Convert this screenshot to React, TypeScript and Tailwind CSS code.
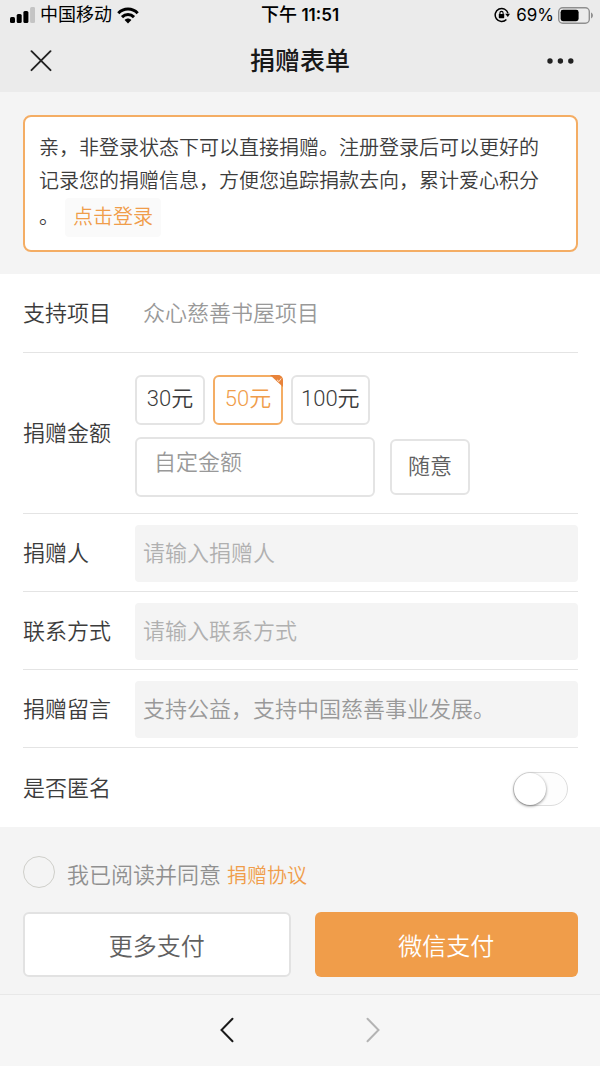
import { useState } from "react";
import type { ReactNode } from "react";

interface RowProps {
    label: string;
    htmlFor?: string;
    className?: string;
    children: ReactNode;
}

const amounts = [30, 50, 100];

const textFields = [
    { id: "donor", label: "捐赠人", placeholder: "请输入捐赠人", tone: "placeholder:text-[#b0b0b0]" },
    { id: "contact", label: "联系方式", placeholder: "请输入联系方式", tone: "placeholder:text-[#b0b0b0]" },
    { id: "message", label: "捐赠留言", placeholder: "支持公益，支持中国慈善事业发展。", tone: "placeholder:text-[#999999]" },
];

const StatusBar = () => (
    <div className="grid h-[30px] grid-cols-[1fr_auto_1fr] items-center px-[6px] text-[18px] leading-[30px] text-black">
        <div className="flex items-center gap-[5px] pl-1">
            <svg width="25" height="16" viewBox="0 0 25 16" aria-hidden="true">
                <rect x="0" y="10" width="5" height="6" rx="1.5" />
                <rect x="6.7" y="7" width="5" height="9" rx="1.5" />
                <rect x="13.4" y="4" width="5" height="12" rx="1.5" />
                <rect x="20.1" y="0" width="5" height="16" rx="1.5" fill="#c4c4c4" />
            </svg>
            <span>中国移动</span>
            <svg width="22" height="17" viewBox="0 0 22 17" fill="none" stroke="#000" strokeWidth="3" aria-hidden="true">
                <path d="M1.3 6.2C6.7.6 15.3.6 20.7 6.2" />
                <path d="M5 10.1c3.4-3.5 8.6-3.5 12 0" />
                <path d="M7.6 12.9c1.9-2 4.9-2 6.8 0L11 16.4z" fill="#000" stroke="none" />
            </svg>
        </div>
        <span className="font-medium">
            下午 <span className="font-['Inter'] text-[17px] font-semibold">11:51</span>
        </span>
        <div className="flex items-center justify-end gap-[6px]">
            <svg width="16" height="16" viewBox="0 0 16 16" fill="none" stroke="#000" aria-hidden="true">
                <path d="M14 6.4A6.5 6.5 0 1 0 12.4 12.4" strokeWidth="1.5" />
                <path d="M11.2 6.8h4.8l-2.2 3.2z" fill="#000" stroke="none" />
                <rect x="4.8" y="7" width="5.4" height="4.2" rx="0.6" fill="#000" stroke="none" />
                <path d="M5.9 7.4V6a1.6 1.6 0 0 1 3.2 0v1.4" strokeWidth="1.1" />
            </svg>
            <div className="flex items-center gap-[4px]">
                <span className="font-['Inter'] text-[17px]">69%</span>
                <svg width="36" height="17" viewBox="0 0 36 17" aria-hidden="true">
                    <rect x="0.7" y="0.7" width="30.6" height="15.6" rx="4" fill="none" stroke="#8f8f8f" strokeWidth="1.4" />
                    <rect x="2.6" y="2.8" width="18" height="11.4" rx="2.4" />
                    <path d="M33 5.6c2.6.8 2.6 5 0 5.8z" fill="#8f8f8f" />
                </svg>
            </div>
        </div>
    </div>
);

const TitleBar = () => (
    <div className="grid h-[62px] grid-cols-[1fr_auto_1fr] items-center px-[26px]">
        <button type="button" aria-label="关闭" className="justify-self-start pl-1">
            <svg width="22" height="22" viewBox="0 0 22 22" stroke="#222" strokeWidth="1.9" strokeLinecap="round">
                <path d="M1.5 1.2l19 19M20.5 1.2l-19 19" />
            </svg>
        </button>
        <h1 className="pt-[2px] text-[25px] font-medium leading-[36px] text-[#181818]">捐赠表单</h1>
        <button type="button" aria-label="更多" className="justify-self-end">
            <svg width="27" height="6" viewBox="0 0 27 6" fill="#222">
                <circle cx="3" cy="3" r="2.7" />
                <circle cx="13.4" cy="3" r="2.7" />
                <circle cx="23.8" cy="3" r="2.7" />
            </svg>
        </button>
    </div>
);

const Row = ({ label, htmlFor, className = "h-[78px]", children }: RowProps) => (
    <div className={`flex items-center border-b border-[#e4e4e4] pt-[2px] last:border-b-0 ${className}`}>
        <label htmlFor={htmlFor} className="w-[112px] shrink-0">
            {label}
        </label>
        {children}
    </div>
);

export default function App() {
    const [amount, setAmount] = useState(50);
    const [anonymous, setAnonymous] = useState(false);
    const [agreed, setAgreed] = useState(false);

    return (
        <div className="min-h-screen bg-[#f4f4f4] font-['Roboto','Noto_Sans_CJK_SC',sans-serif] text-[22px] font-[350] leading-[32px] text-[#3c3c3c]">
            <header className="bg-[#ebebeb] font-normal">
                <StatusBar />
                <TitleBar />
            </header>

            <section className="pb-[22px] pl-[23px] pr-[22px] pt-[23px]">
                <p className="rounded-lg border-2 border-[#f4ad64] bg-white pb-[13px] pl-[14px] pr-[30px] pt-[15px] text-[20px] leading-[33px] [line-break:anywhere]">
                    亲，非登录状态下可以直接捐赠。注册登录后可以更好的记录您的捐赠信息，方便您追踪捐款去向，累计爱心积分。
                    <a href="#login" className="ml-[6px] inline-block whitespace-nowrap rounded bg-[#fafafa] px-2 leading-[39px] text-[#f09d4a]">
                        点击登录
                    </a>
                </p>
            </section>

            <form onSubmit={(e) => e.preventDefault()}>
                <div className="bg-white pl-[23px] pr-[22px]">
                    <Row label="支持项目" htmlFor="project" className="h-[79px]">
                        <output id="project" className="pl-2 text-[#999999]">
                            众心慈善书屋项目
                        </output>
                    </Row>

                    <Row label="捐赠金额" htmlFor="custom-amount" className="h-[161px]">
                        <div className="flex flex-col gap-3 pt-1">
                            <div className="flex gap-2">
                                {amounts.map((value) => (
                                    <button
                                        key={value}
                                        type="button"
                                        onClick={() => setAmount(value)}
                                        className={`relative h-[50px] min-w-[70px] rounded-md border-2 px-2 pb-[2px] ${
                                            amount === value
                                                ? "border-[#f4ad64] text-[#f09d4a]"
                                                : "border-[#e4e4e4]"
                                        }`}
                                    >
                                        {value}元
                                        {amount === value && (
                                            <svg
                                                width="13"
                                                height="12"
                                                viewBox="0 0 13 12"
                                                className="absolute -right-[2px] -top-[2px]"
                                                aria-hidden="true"
                                            >
                                                <path d="M0 0h8a5 5 0 0 1 5 5v7z" fill="#e8833a" />
                                                <path d="M7 4.8l2 1.8 2.2-3.2" fill="none" stroke="#fbe3cf" strokeWidth="1" />
                                            </svg>
                                        )}
                                    </button>
                                ))}
                            </div>
                            <div className="flex items-center gap-[15px]">
                                <input
                                    id="custom-amount"
                                    type="text"
                                    inputMode="decimal"
                                    placeholder="自定金额"
                                    className="h-[60px] w-[240px] rounded-md border-2 border-[#e4e4e4] bg-white pb-[10px] pl-[17px] placeholder:text-[#999999] focus:outline-none"
                                />
                                <button
                                    type="button"
                                    className="h-[56px] rounded-md border-2 border-[#e4e4e4] px-4 text-[#606060]"
                                >
                                    随意
                                </button>
                            </div>
                        </div>
                    </Row>

                    {textFields.map((field) => (
                        <Row key={field.id} label={field.label} htmlFor={field.id}>
                            <input
                                id={field.id}
                                type="text"
                                placeholder={field.placeholder}
                                className={`h-[57px] min-w-0 flex-1 rounded bg-[#f4f4f4] px-2 focus:outline-none ${field.tone}`}
                            />
                        </Row>
                    ))}

                    <Row label="是否匿名" htmlFor="anonymous" className="h-[79px] justify-between pr-[10px]">
                        <input
                            id="anonymous"
                            type="checkbox"
                            role="switch"
                            checked={anonymous}
                            onChange={(e) => setAnonymous(e.target.checked)}
                            className="flex h-[34px] w-[55px] appearance-none items-center rounded-full border border-[#dddddd] bg-[#fdfdfd] before:h-[32px] before:w-[32px] before:rounded-full before:bg-white before:shadow-[0_1px_3px_rgba(0,0,0,0.5)] before:content-[''] checked:justify-end checked:bg-[#f2a655]"
                        />
                    </Row>
                </div>

                <div className="pb-[17px] pl-[23px] pr-[22px] pt-[29px]">
                    <div className="flex items-center">
                        <input
                            id="agree"
                            type="checkbox"
                            checked={agreed}
                            onChange={(e) => setAgreed(e.target.checked)}
                            className="h-[32px] w-[32px] appearance-none rounded-full border border-[#cfcfca] checked:border-8 checked:border-[#f2a655]"
                        />
                        <div className="-mb-2 flex items-center gap-[6px] pl-3">
                            <label htmlFor="agree" className="text-[#909090]">
                                我已阅读并同意
                            </label>
                            <a href="#agreement" className="text-[20px] text-[#f09d4a]">
                                捐赠协议
                            </a>
                        </div>
                    </div>
                    <div className="mt-[24px] flex gap-6 text-[24px]">
                        <button type="button" className="h-[65px] flex-1 rounded-md border-2 border-[#e2e2e2] bg-white pt-1 text-[#606060]">
                            更多支付
                        </button>
                        <button type="submit" className="h-[65px] flex-1 rounded-md bg-[#f09d4a] pt-1 text-white">
                            微信支付
                        </button>
                    </div>
                </div>
            </form>

            <nav className="flex h-[72px] items-center justify-center gap-[132px] border-t border-[#e8e8e8] bg-[#f6f6f6] pb-[2px]">
                <button type="button" aria-label="后退">
                    <svg width="14" height="26" viewBox="0 0 14 26" fill="none" stroke="#1a1a1a" strokeWidth="2" strokeLinecap="round">
                        <path d="M12.5 1.8L1.5 13l11 11.2" />
                    </svg>
                </button>
                <button type="button" aria-label="前进">
                    <svg width="14" height="26" viewBox="0 0 14 26" fill="none" stroke="#b4b4b4" strokeWidth="2" strokeLinecap="round">
                        <path d="M1.5 1.8L12.5 13l-11 11.2" />
                    </svg>
                </button>
            </nav>
        </div>
    );
}
